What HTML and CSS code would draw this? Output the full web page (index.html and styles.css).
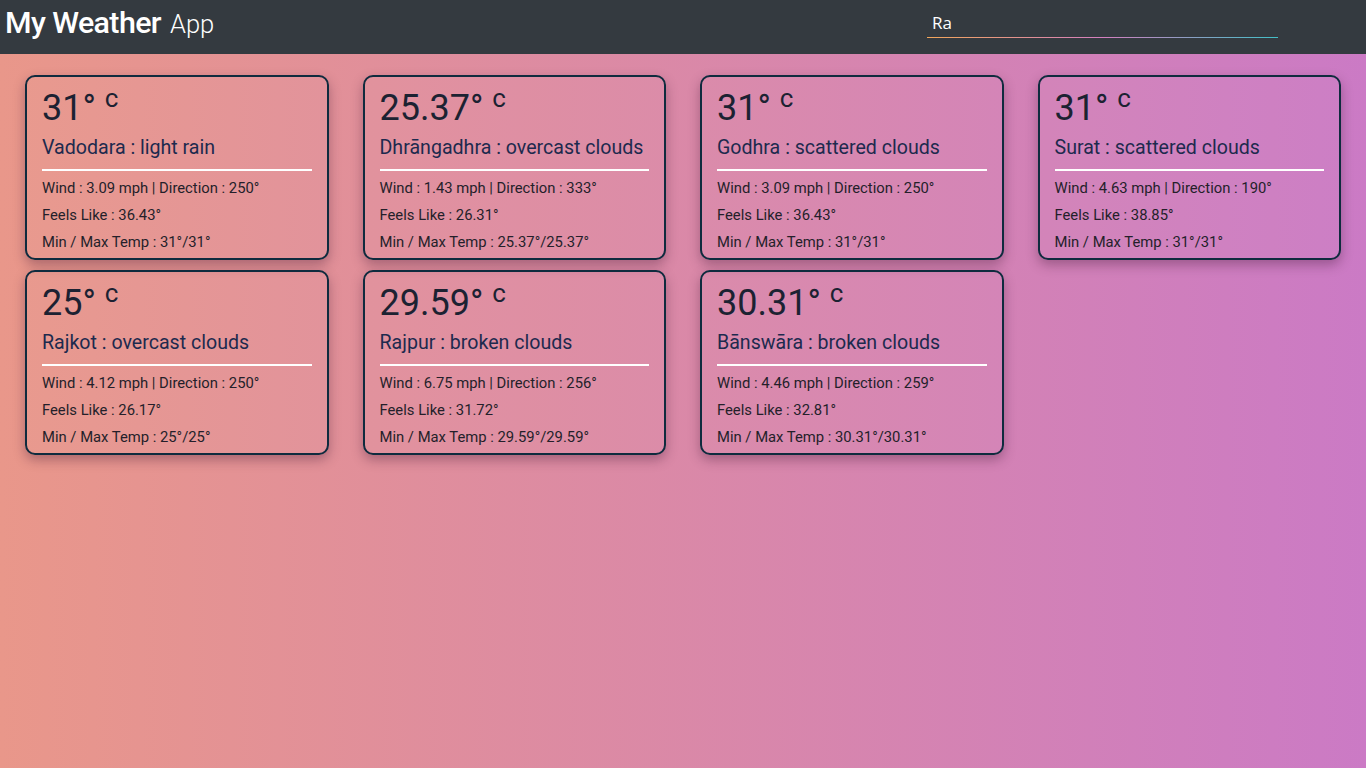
FILE: index.html
```html
<!DOCTYPE html>
<html lang="en">
<head>
<meta charset="utf-8">
<title>My Weather App</title>
<link rel="stylesheet" href="styles.css">
</head>
<body>
<header class="navbar">
  <h1 class="brand">My Weather <span class="brand-light">App</span></h1>
  <div class="search">
    <input class="search-input" type="text" value="Ra">
    <div class="search-line"></div>
  </div>
</header>
<main class="grid">
  <div class="card">
    <div class="temp">31° <sup>c</sup></div>
    <div class="city">Vadodara : light rain</div>
    <hr class="rule">
    <p class="info">Wind : 3.09 mph | Direction : 250°</p>
    <p class="info">Feels Like : 36.43°</p>
    <p class="info">Min / Max Temp : 31°/31°</p>
  </div>
  <div class="card">
    <div class="temp">25.37° <sup>c</sup></div>
    <div class="city">Dhrāngadhra : overcast clouds</div>
    <hr class="rule">
    <p class="info">Wind : 1.43 mph | Direction : 333°</p>
    <p class="info">Feels Like : 26.31°</p>
    <p class="info">Min / Max Temp : 25.37°/25.37°</p>
  </div>
  <div class="card">
    <div class="temp">31° <sup>c</sup></div>
    <div class="city">Godhra : scattered clouds</div>
    <hr class="rule">
    <p class="info">Wind : 3.09 mph | Direction : 250°</p>
    <p class="info">Feels Like : 36.43°</p>
    <p class="info">Min / Max Temp : 31°/31°</p>
  </div>
  <div class="card">
    <div class="temp">31° <sup>c</sup></div>
    <div class="city">Surat : scattered clouds</div>
    <hr class="rule">
    <p class="info">Wind : 4.63 mph | Direction : 190°</p>
    <p class="info">Feels Like : 38.85°</p>
    <p class="info">Min / Max Temp : 31°/31°</p>
  </div>
  <div class="card">
    <div class="temp">25° <sup>c</sup></div>
    <div class="city">Rajkot : overcast clouds</div>
    <hr class="rule">
    <p class="info">Wind : 4.12 mph | Direction : 250°</p>
    <p class="info">Feels Like : 26.17°</p>
    <p class="info">Min / Max Temp : 25°/25°</p>
  </div>
  <div class="card">
    <div class="temp">29.59° <sup>c</sup></div>
    <div class="city">Rajpur : broken clouds</div>
    <hr class="rule">
    <p class="info">Wind : 6.75 mph | Direction : 256°</p>
    <p class="info">Feels Like : 31.72°</p>
    <p class="info">Min / Max Temp : 29.59°/29.59°</p>
  </div>
  <div class="card">
    <div class="temp">30.31° <sup>c</sup></div>
    <div class="city">Bānswāra : broken clouds</div>
    <hr class="rule">
    <p class="info">Wind : 4.46 mph | Direction : 259°</p>
    <p class="info">Feels Like : 32.81°</p>
    <p class="info">Min / Max Temp : 30.31°/30.31°</p>
  </div>
</main>
</body>
</html>
```

FILE: styles.css
```css
* { box-sizing: border-box; }
html, body { height: 100%; }
body {
  margin: 0;
  font-family: Roboto, "Noto Sans", sans-serif;
  background: linear-gradient(to right, #e9978a, #cb7ac5);
  min-height: 768px;
}
.navbar {
  height: 54px;
  background: #343a40;
  display: flex;
  align-items: flex-start;
  justify-content: space-between;
  padding: 0 88px 0 5px;
}
.brand {
  margin: 0;
  font-size: 30.4px;
  font-weight: 500;
  color: #fff;
  line-height: 46px;
  letter-spacing: -0.6px;
}
.brand-light {
  margin-left: 2px;
  font-size: 25.5px;
  font-weight: 300;
  letter-spacing: 0;
}
.search {
  width: 351px;
  padding-top: 10px;
}
.search-input {
  display: block;
  width: 100%;
  border: 0;
  outline: none;
  background: transparent;
  color: #fff;
  font-family: "Open Sans", Roboto, sans-serif;
  font-size: 17px;
  padding: 0 5px;
  height: 26px;
  line-height: 26px;
}
.search-line {
  height: 1px;
  margin-top: 1px;
  background: linear-gradient(to right, #f2a65a, #d47fc0 50%, #42bfc7);
}
.grid {
  display: grid;
  grid-template-columns: repeat(4, 1fr);
  column-gap: 34px;
  row-gap: 10px;
  padding: 21px 25px;
}
.card {
  border: 2px solid #0f2b3e;
  border-radius: 10px;
  padding: 10px 15px 2px;
  background: rgba(255, 255, 255, 0.03);
  box-shadow: 0 5px 12px rgba(60, 20, 50, 0.35);
}
.temp {
  font-size: 36px;
  line-height: 43px;
  color: #1c2232;
}
.temp sup {
  font-size: 26px;
  line-height: 0;
  vertical-align: 13px;
}
.city {
  margin-top: 6px;
  font-size: 19.6px;
  line-height: 24px;
  color: #1d2a4e;
}
.rule {
  margin: 9px 0 4px;
  border: 0;
  height: 2px;
  background: #fff;
}
.info {
  margin: 0;
  font-size: 14.8px;
  line-height: 27px;
  color: #241f2a;
}
```
